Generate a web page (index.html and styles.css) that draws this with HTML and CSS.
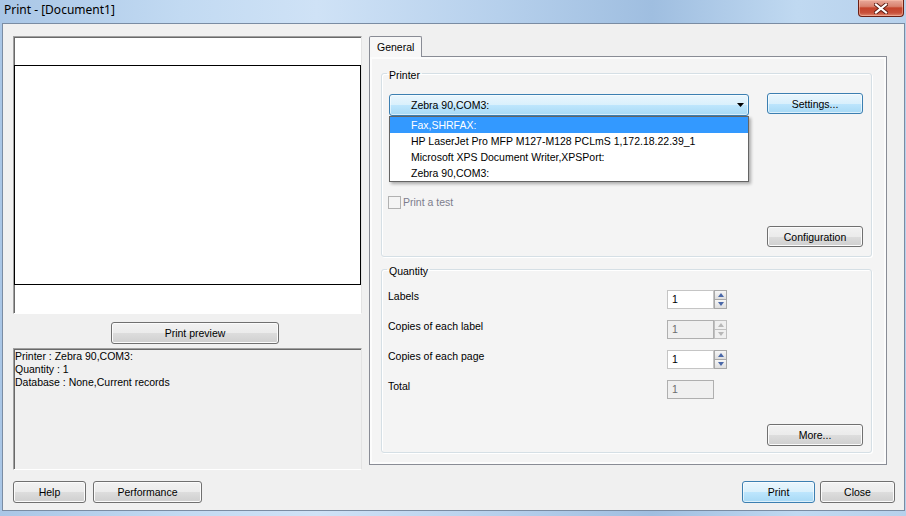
FILE: index.html
```html
<!DOCTYPE html>
<html>
<head>
<meta charset="utf-8">
<link rel="stylesheet" href="styles.css">
</head>
<body>
<div class="frame">
  <div class="titlebar">
    <span class="title">Print - [Document1]</span>
    <div class="close">
      <svg width="14" height="11" viewBox="0 0 14 11"><path d="M2 1.5L12 9.5M12 1.5L2 9.5" stroke="#5b1a10" stroke-width="4" stroke-linecap="square"/><path d="M2 1.5L12 9.5M12 1.5L2 9.5" stroke="#fff" stroke-width="2.2" stroke-linecap="square"/></svg>
    </div>
  </div>
  <div class="client">
    <div class="main">
      <div class="left">
        <div class="preview"><div class="page"></div></div>
        <div class="pp-row"><button class="btn pp">Print preview</button></div>
        <div class="info">Printer : Zebra 90,COM3:<br>Quantity : 1<br>Database : None,Current records</div>
      </div>
      <div class="right">
        <div class="tabs"><div class="tab">General</div></div>
        <div class="panel">
          <fieldset class="group printer">
            <legend>Printer</legend>
            <div class="row1">
              <div class="combo">
                <span class="combo-text">Zebra 90,COM3:</span>
                <svg class="arrow" width="7" height="4" viewBox="0 0 7 4"><path d="M0 0H7L3.5 4Z" fill="#000"/></svg>
                <div class="list">
                  <div class="item sel">Fax,SHRFAX:</div>
                  <div class="item">HP LaserJet Pro MFP M127-M128 PCLmS 1,172.18.22.39_1</div>
                  <div class="item">Microsoft XPS Document Writer,XPSPort:</div>
                  <div class="item">Zebra 90,COM3:</div>
                </div>
              </div>
              <button class="btn blue settings">Settings...</button>
            </div>
            <div class="check"><span class="box"></span><span class="check-text">Print a test</span></div>
            <div class="btn-right"><button class="btn wide">Configuration</button></div>
          </fieldset>
          <fieldset class="group quantity">
            <legend>Quantity</legend>
            <div class="qgrid">
              <span class="qlabel">Labels</span>
              <div class="spin">
                <div class="field">1</div>
                <div class="spin-btns"><span class="sb"><i class="up"></i></span><span class="sb"><i class="down"></i></span></div>
              </div>
              <span class="qlabel">Copies of each label</span>
              <div class="spin disabled">
                <div class="field">1</div>
                <div class="spin-btns"><span class="sb"><i class="up"></i></span><span class="sb"><i class="down"></i></span></div>
              </div>
              <span class="qlabel">Copies of each page</span>
              <div class="spin">
                <div class="field">1</div>
                <div class="spin-btns"><span class="sb"><i class="up"></i></span><span class="sb"><i class="down"></i></span></div>
              </div>
              <span class="qlabel">Total</span>
              <div class="spin disabled">
                <div class="field">1</div>
              </div>
            </div>
            <div class="btn-right more-row"><button class="btn wide more">More...</button></div>
          </fieldset>
        </div>
      </div>
    </div>
    <div class="bottom">
      <button class="btn help">Help</button>
      <button class="btn perf">Performance</button>
      <span class="spacer"></span>
      <button class="btn blue print">Print</button>
      <button class="btn closeb">Close</button>
    </div>
  </div>
</div>
</body>
</html>
```
FILE: styles.css
```css
* { box-sizing: border-box; }
body {
  margin: 0;
  width: 906px;
  height: 516px;
  overflow: hidden;
  font-family: "Liberation Sans", Arial, sans-serif;
  font-size: 10.5px;
  color: #000;
}
.frame {
  width: 906px;
  height: 516px;
  display: flex;
  flex-direction: column;
  padding: 0 1px 5px 2px;
  background: linear-gradient(90deg, #a9c6e6 0%, #c2daf2 20%, #cfe2f6 35%, #b6d0ec 55%, #9fbee0 72%, #c0d9f1 88%, #b7d1ec 100%);
}
.titlebar {
  height: 23px;
  display: flex;
  justify-content: space-between;
  align-items: flex-start;
}
.title {
  padding: 2px 0 0 2px;
  font-family: "Noto Sans", "Open Sans", sans-serif;
  font-size: 12px;
  line-height: 16px;
  color: #000;
}
.close {
  width: 46px;
  height: 17px;
  margin-right: 1px;
  border: 1px solid #6b1f14;
  border-top: none;
  border-radius: 0 0 4px 4px;
  background: linear-gradient(#e9a99a 0%, #d9826f 40%, #c4432b 50%, #c8503a 80%, #e08a72 100%);
  box-shadow: inset 0 0 0 1px rgba(255, 200, 180, 0.5);
  display: flex;
  align-items: center;
  justify-content: center;
}
.client {
  flex: 1;
  border: 1px solid #7a8ca3;
  background: #f0f0f0;
  padding: 12px 16px 0 10px;
  display: flex;
  flex-direction: column;
}
.main {
  height: 434px;
  display: flex;
  gap: 7px;
}
.left {
  width: 349px;
  display: flex;
  flex-direction: column;
}
.preview {
  height: 278px;
  background: #fff;
  border: 1px solid;
  border-color: #a0a0a0 #e3e3e3 #fff #a0a0a0;
  box-shadow: inset 1px 1px 0 #696969;
  padding-top: 28px;
}
.page {
  height: 220px;
  border: 1px solid #000;
  background: #fff;
}
.pp-row {
  margin-top: 8px;
  padding-left: 98px;
}
.btn {
  font-family: "Liberation Sans", Arial, sans-serif;
  font-size: 10.5px;
  color: #000;
  height: 22px;
  padding: 0;
  border: 1px solid #707070;
  border-radius: 3px;
  background: linear-gradient(#f2f2f2 0%, #ebebeb 50%, #dddddd 50%, #cfcfcf 100%);
  box-shadow: inset 0 0 0 1px #fbfbfb;
}
.btn.blue {
  border-color: #3c7fb1;
  background: linear-gradient(#eaf6fd 0%, #d9f0fc 50%, #bee6fd 50%, #a7d9f5 100%);
  box-shadow: inset 0 0 0 1px rgba(255, 255, 255, 0.6);
}
.pp { width: 168px; }
.info {
  margin-top: 4px;
  height: 122px;
  border: 1px solid;
  border-color: #a0a0a0 #e3e3e3 #fff #a0a0a0;
  box-shadow: inset 1px 1px 0 #696969;
  padding: 1px 1px 0 1px;
  line-height: 13px;
  background: #f0f0f0;
}
.right {
  width: 518px;
  display: flex;
  flex-direction: column;
}
.tabs {
  height: 20px;
  display: flex;
}
.tab {
  position: relative;
  z-index: 2;
  width: 53px;
  height: 21px;
  border: 1px solid #898c95;
  border-bottom: none;
  border-radius: 2px 2px 0 0;
  background: #f7f7f7;
  padding: 4px 0 0 7px;
  line-height: 13px;
}
.panel {
  height: 409px;
  border: 1px solid #898c95;
  background: #f4f4f4;
  box-shadow: inset 0 0 0 2px #fcfcfc;
  padding: 8px 14px 0 11px;
}
.group {
  margin: 0;
  border: 1px solid #d5dfe5;
  border-radius: 3px;
  box-shadow: 1px 1px 0 #fff, inset 1px 1px 0 #fff;
  min-width: 0;
}
.group legend {
  padding: 4px 2px 0;
  margin-left: -2px;
  line-height: 13px;
  font-size: 10.5px;
}
.printer {
  height: 192px;
  padding: 11px 8px 0 7px;
}
.row1 {
  display: flex;
  align-items: flex-start;
  gap: 18px;
}
.combo {
  position: relative;
  margin-top: 1px;
  width: 360px;
  height: 22px;
  border: 1px solid #3c7fb1;
  border-radius: 3px;
  background: linear-gradient(#eaf6fd 0%, #d9f0fc 50%, #bee6fd 50%, #a7d9f5 100%);
  box-shadow: inset 0 0 0 1px rgba(255, 255, 255, 0.55);
  display: flex;
  align-items: center;
  padding: 0 4px 0 21px;
}
.combo-text { flex: 1; line-height: 13px; }
.arrow { display: block; }
.list {
  position: absolute;
  top: 21px;
  left: -1px;
  width: 360px;
  border: 1px solid #646464;
  background: #fff;
  box-shadow: 2px 2px 3px rgba(0, 0, 0, 0.3);
  z-index: 5;
}
.item {
  height: 16px;
  line-height: 16px;
  padding-left: 21px;
  white-space: nowrap;
}
.item.sel {
  background: #3399ff;
  color: #fff;
}
.settings {
  width: 96px;
  height: 21px;
}
.check {
  margin: 80px 0 0 -1px;
  display: flex;
  align-items: center;
  gap: 2px;
  height: 13px;
}
.box {
  width: 13px;
  height: 13px;
  border: 1px solid #b1b1b1;
  background: #f4f4f4;
}
.check-text {
  color: #7d7d8d;
  line-height: 13px;
}
.btn-right {
  display: flex;
  justify-content: flex-end;
  margin-top: 17px;
}
.wide {
  width: 96px;
  height: 21px;
}
.quantity {
  margin-top: 4px;
  height: 192px;
  padding: 12px 8px 0 7px;
}
.qgrid {
  display: grid;
  grid-template-columns: 278px auto;
  row-gap: 11px;
}
.qlabel {
  line-height: 13px;
  height: 19px;
  padding-top: 0;
  margin-left: -1px;
}
.spin {
  display: flex;
  height: 19px;
}
.field {
  width: 47px;
  height: 19px;
  border: 1px solid #abadb3;
  border-color: #abadb3 #dbdfe6 #e3e9ef #e2e3ea;
  outline: 1px solid #c5c5c5;
  outline-offset: -1px;
  background: #fff;
  padding-left: 4px;
  line-height: 17px;
}
.spin.disabled .field {
  background: #f0f0f0;
  color: #6d6d6d;
  outline-color: #afafaf;
}
.spin-btns {
  width: 13px;
  display: flex;
  flex-direction: column;
}
.sb {
  height: 10px;
  border: 1px solid #a8a8a8;
  background: linear-gradient(#f6f6f6, #dedede);
  display: flex;
  align-items: center;
  justify-content: center;
}
.sb + .sb { height: 9px; border-top: none; }
.sb i {
  width: 0;
  height: 0;
  border-left: 3.5px solid transparent;
  border-right: 3.5px solid transparent;
}
.sb i.up { border-bottom: 4px solid #4a68a8; }
.sb i.down { border-top: 4px solid #4a68a8; }
.spin.disabled .sb i.up { border-bottom-color: #b8b8b8; }
.spin.disabled .sb i.down { border-top-color: #b8b8b8; }
.spin.disabled .sb { background: #f0f0f0; border-color: #c0c0c0; }
.more-row { margin-top: 25px; }
.more { height: 22px; }
.bottom {
  margin-top: 11px;
  margin-right: -7px;
  display: flex;
  height: 22px;
}
.help { width: 73px; }
.perf { width: 109px; margin-left: 7px; }
.spacer { flex: 1; }
.print { width: 73px; }
.closeb { width: 75px; margin-left: 5px; }
```
